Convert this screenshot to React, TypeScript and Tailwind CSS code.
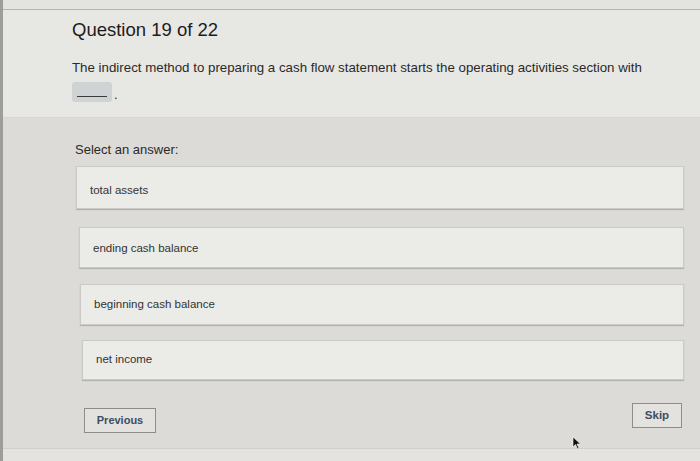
import React from "react";

const options = [
  { label: "total assets", ml: "ml-[73px]", mt: "mt-0", h: "h-[43px] pt-[7px]" },
  { label: "ending cash balance", ml: "ml-[76px]", mt: "mt-[18px]", h: "h-[41px] pt-[2px]" },
  { label: "beginning cash balance", ml: "ml-[77px]", mt: "mt-[16px]", h: "h-[41px]" },
  { label: "net income", ml: "ml-[79px]", mt: "mt-[15px]", h: "h-[40px]" },
];

export default function App() {
  return (
    <div
      className="w-[700px] h-[461px] overflow-hidden flex bg-[#dcdbd7] text-[#262626]"
      style={{ fontFamily: '"Liberation Sans", Arial, sans-serif' }}
    >
      <div className="w-[3px] h-full bg-[#9e9d99] shrink-0" />
      <div className="flex-1 flex flex-col">
        <div className="h-[10px] bg-[#e3e3e0] border-b border-[#b5b5b2] shrink-0" />
        <div className="h-[108px] bg-[#e7e7e4] pl-[69px] pt-[9px] shrink-0 border-b border-[#d6d5d1]">
          <div className="text-[18.5px] leading-[22px] text-[#1c1c1c]">Question 19 of 22</div>
          <div className="mt-[19px] text-[13.3px] leading-[16px] text-[#2a2a2a]">
            The indirect method to preparing a cash flow statement starts the operating activities section with
          </div>
          <div className="mt-[6px] flex items-end gap-[2px]">
            <div className="w-[40px] h-[20px] rounded-[3px] bg-[#cfd3d3] flex items-end justify-center pb-[5px]">
              <div className="w-[30px] h-[1px] bg-[#3a3a3a]" />
            </div>
            <span className="text-[13px] leading-[14px]">.</span>
          </div>
        </div>
        <div className="flex-1 flex flex-col">
          <div className="ml-[72px] mt-[24px] text-[13px] leading-[16px] text-[#2a2a2a]">Select an answer:</div>
          <div className="flex flex-col mt-[8px]">
            {options.map((o) => (
              <div
                key={o.label}
                className={`${o.ml} ${o.mt} ${o.h} mr-[16px] bg-[#ebebe8] border border-[#c9c9c6] shadow-[0_1px_1px_rgba(0,0,0,0.18)] flex items-center pl-[13px] text-[11.5px] text-[#333]`}
              >
                {o.label}
              </div>
            ))}
          </div>
          <div className="mt-[23px] flex items-start justify-between ml-[81px] mr-[18px]">
            <div className="mt-[5px] w-[72px] h-[25px] border border-[#8d8d8a] bg-[#e3e2de] flex items-center justify-center text-[11px] font-bold text-[#3d4d60]">
              Previous
            </div>
            <div className="relative w-[50px] h-[25px] border border-[#8d8d8a] bg-[#e3e2de] flex items-center justify-center text-[11.5px] font-bold text-[#3d4d60]">
              Skip
              <svg className="absolute left-[-61px] top-[32px]" width="10" height="14" viewBox="0 0 10 14">
                <path d="M1 1 L1 11 L3.5 8.5 L5.5 13 L7 12.3 L5 8 L8.5 8 Z" fill="#111" stroke="#fff" strokeWidth="0.6" />
              </svg>
            </div>
          </div>
          <div className="mt-auto h-[13px] bg-[#e4e3df] border-t border-[#d0cfcb]" />
        </div>
      </div>
    </div>
  );
}
